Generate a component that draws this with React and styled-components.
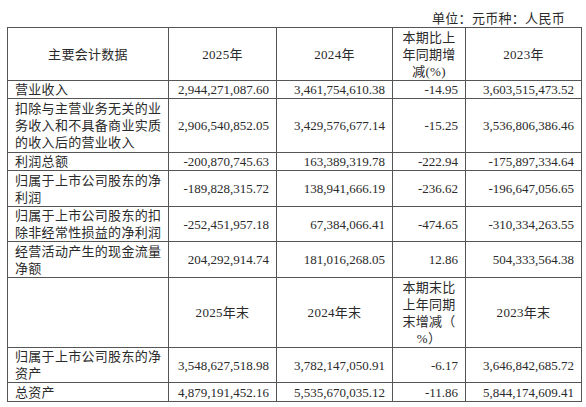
import React from 'react';
import styled, { createGlobalStyle } from 'styled-components';

const GlobalStyle = createGlobalStyle`
  html, body {
    margin: 0;
    padding: 0;
    background: #ffffff;
  }
  body {
    font-family: "Liberation Serif", "Noto Sans CJK SC", serif;
    color: #2a2a2a;
  }
`;

const Page = styled.div`
  width: 586px;
  height: 407px;
  padding: 11px 0 0 7px;
  box-sizing: border-box;
  overflow: hidden;
`;

const Unit = styled.div`
  width: 558px;
  text-align: right;
  font-size: 13px;
  line-height: 16px;
  letter-spacing: 0.3px;
`;

const Table = styled.table`
  width: 574px;
  border-collapse: collapse;
  table-layout: fixed;
  font-size: 13px;
`;

const Row = styled.tr`
  height: ${({ h }) => h}px;
`;

const Cell = styled.td`
  border: 1px solid #555555;
  padding: 0 7px;
  line-height: 17px;
  vertical-align: middle;
  text-align: ${({ align }) => align || 'left'};
  letter-spacing: ${({ align }) => (align === 'right' ? '0' : '0.3px')};
  font-size: 13px;
  white-space: nowrap;
  overflow: hidden;
`;

const Head = styled(Cell)`
  text-align: center;
  letter-spacing: 0.3px;
  padding: 0 2px;
`;

const rows = [
  { h: 18, label: ['营业收入'], v: ['2,944,271,087.60', '3,461,754,610.38', '-14.95', '3,603,515,473.52'] },
  {
    h: 54,
    label: ['扣除与主营业务无关的业', '务收入和不具备商业实质', '的收入后的营业收入'],
    v: ['2,906,540,852.05', '3,429,576,677.14', '-15.25', '3,536,806,386.46'],
  },
  { h: 17, label: ['利润总额'], v: ['-200,870,745.63', '163,389,319.78', '-222.94', '-175,897,334.64'] },
  {
    h: 36,
    label: ['归属于上市公司股东的净', '利润'],
    v: ['-189,828,315.72', '138,941,666.19', '-236.62', '-196,647,056.65'],
  },
  {
    h: 33,
    label: ['归属于上市公司股东的扣', '除非经常性损益的净利润'],
    v: ['-252,451,957.18', '67,384,066.41', '-474.65', '-310,334,263.55'],
  },
  {
    h: 36,
    label: ['经营活动产生的现金流量', '净额'],
    v: ['204,292,914.74', '181,016,268.05', '12.86', '504,333,564.38'],
  },
];

const rows2 = [
  {
    h: 34,
    label: ['归属于上市公司股东的净', '资产'],
    v: ['3,548,627,518.98', '3,782,147,050.91', '-6.17', '3,646,842,685.72'],
  },
  { h: 19, label: ['总资产'], v: ['4,879,191,452.16', '5,535,670,035.12', '-11.86', '5,844,174,609.41'] },
];

const Lines = ({ lines }) =>
  lines.map((l, i) => (
    <React.Fragment key={i}>
      {i > 0 && <br />}
      {l}
    </React.Fragment>
  ));

const DataRow = ({ row }) => (
  <Row h={row.h}>
    <Cell>
      <Lines lines={row.label} />
    </Cell>
    {row.v.map((v, i) => (
      <Cell key={i} align="right">
        {v}
      </Cell>
    ))}
  </Row>
);

const App = () => (
  <Page>
    <GlobalStyle />
    <Unit>单位：元币种：人民币</Unit>
    <Table>
      <colgroup>
        <col style={{ width: 161 }} />
        <col style={{ width: 108 }} />
        <col style={{ width: 116 }} />
        <col style={{ width: 73 }} />
        <col style={{ width: 116 }} />
      </colgroup>
      <tbody>
        <Row h={53}>
          <Head>主要会计数据</Head>
          <Head>2025年</Head>
          <Head>2024年</Head>
          <Head>
            <Lines lines={['本期比上', '年同期增', '减(%)']} />
          </Head>
          <Head>2023年</Head>
        </Row>
        {rows.map((r, i) => (
          <DataRow key={i} row={r} />
        ))}
        <Row h={70}>
          <Head />
          <Head>2025年末</Head>
          <Head>2024年末</Head>
          <Head>
            <Lines lines={['本期末比', '上年同期', '末增减（', '%）']} />
          </Head>
          <Head>2023年末</Head>
        </Row>
        {rows2.map((r, i) => (
          <DataRow key={i} row={r} />
        ))}
      </tbody>
    </Table>
  </Page>
);

export default App;
